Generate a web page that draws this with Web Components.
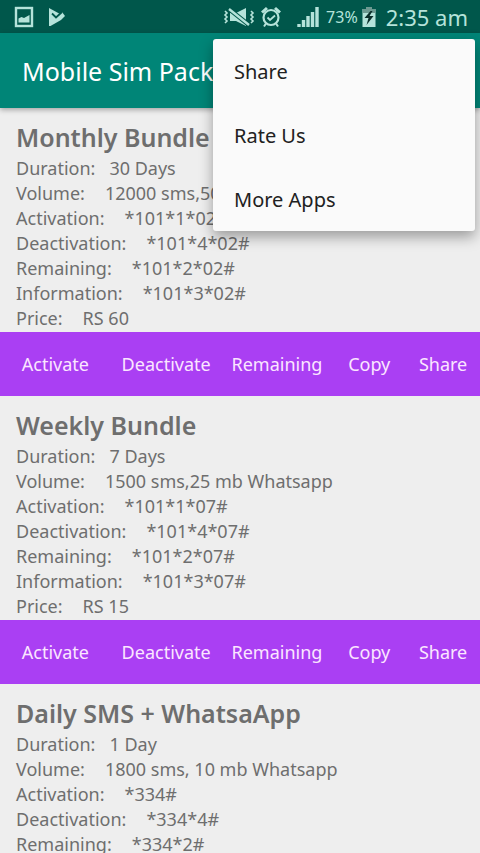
<!DOCTYPE html>
<html lang="en">
<head>
<meta charset="utf-8">
<meta name="viewport" content="width=device-width, initial-scale=1">
<title>Mobile Sim Pack</title>
<style>
    body {
        margin: 0;
        background: #eeeeee;
        color: #6e6e6e;
        font-family: "Noto Sans", "Open Sans", sans-serif;
    }
</style>
</head>
<body>
<sim-app>
    <status-bar slot="status" battery="73%" time="2:35 am"></status-bar>
    <app-bar slot="bar" text="Mobile Sim Pack">
        <menu-option text="Share"></menu-option>
        <menu-option text="Rate Us"></menu-option>
        <menu-option text="More Apps"></menu-option>
    </app-bar>

    <bundle-card text="Monthly Bundle">
        <bundle-row label="Duration:" short>30 Days</bundle-row>
        <bundle-row label="Volume:">12000 sms,50</bundle-row>
        <bundle-row label="Activation:">*101*1*02#</bundle-row>
        <bundle-row label="Deactivation:">*101*4*02#</bundle-row>
        <bundle-row label="Remaining:">*101*2*02#</bundle-row>
        <bundle-row label="Information:">*101*3*02#</bundle-row>
        <bundle-row label="Price:">RS 60</bundle-row>
    </bundle-card>
    <bundle-actions></bundle-actions>

    <bundle-card text="Weekly Bundle">
        <bundle-row label="Duration:" short>7 Days</bundle-row>
        <bundle-row label="Volume:">1500 sms,25 mb Whatsapp</bundle-row>
        <bundle-row label="Activation:">*101*1*07#</bundle-row>
        <bundle-row label="Deactivation:">*101*4*07#</bundle-row>
        <bundle-row label="Remaining:">*101*2*07#</bundle-row>
        <bundle-row label="Information:">*101*3*07#</bundle-row>
        <bundle-row label="Price:">RS 15</bundle-row>
    </bundle-card>
    <bundle-actions></bundle-actions>

    <bundle-card text="Daily SMS + WhatsaApp">
        <bundle-row label="Duration:" short>1 Day</bundle-row>
        <bundle-row label="Volume:">1800 sms, 10 mb Whatsapp</bundle-row>
        <bundle-row label="Activation:">*334#</bundle-row>
        <bundle-row label="Deactivation:">*334*4#</bundle-row>
        <bundle-row label="Remaining:">*334*2#</bundle-row>
    </bundle-card>
</sim-app>

<script>
class SimApp extends HTMLElement {
    constructor() {
        super();
        this.attachShadow({ mode: "open" });
        this.shadowRoot.innerHTML = `
        <style>
        :host {
            display: flex;
            flex-direction: column;
            height: 100vh;
        }
        header {
            position: relative;
            z-index: 1;
        }
        main {
            flex: 1;
            min-height: 0;
            overflow-y: auto;
            scrollbar-width: none;
        }
        </style>
        <header>
            <slot name="status"></slot>
            <slot name="bar"></slot>
        </header>
        <main><slot></slot></main>
        `;
    }
}
customElements.define("sim-app", SimApp);

class StatusBar extends HTMLElement {
    constructor() {
        super();
        this.attachShadow({ mode: "open" });
        this.shadowRoot.innerHTML = `
        <style>
        :host {
            display: flex;
            align-items: center;
            justify-content: space-between;
            height: 33px;
            padding: 0 12px 0 14px;
            background: #00574b;
            color: #b5e3da;
        }
        div {
            display: flex;
            align-items: center;
        }
        svg {
            display: block;
            fill: none;
            stroke: currentColor;
        }
        .left {
            gap: 14px;
        }
        .alarm {
            margin: 0 16px 0 6px;
        }
        .battery {
            font-size: 16px;
            margin: 0 4px 0 7px;
        }
        .time {
            font-size: 22px;
            line-height: 30px;
            margin-left: 10px;
        }
        </style>
        <div class="left">
            <svg width="20" height="22" viewBox="0 0 20 22">
                <rect x="2" y="2" width="16" height="18" stroke-width="2.4"/>
                <path d="M4.500 16.500v-4l3-1.500 2.500 1 5.500-3v7.500z" fill="currentColor" stroke="none"/>
            </svg>
            <svg width="18" height="20" viewBox="0 0 18 20">
                <path d="M1 1l11 6 2-2 3 4-4 4L2.500 19H1z" fill="currentColor" stroke="none"/>
                <path d="M4 6.500l4 4 6-5.500" stroke="#00574b" stroke-width="1.800"/>
            </svg>
        </div>
        <div>
            <svg width="32" height="22" viewBox="0 0 32 22">
                <path d="M2 5l2 2-2 2 2 2-2 2 2 2-2 2M28 5l2 2-2 2 2 2-2 2 2 2-2 2" stroke-width="1.600"/>
                <path d="M7 7h6l10-5v18l-10-5H7z" fill="currentColor" stroke="none"/>
                <path d="M6 3l20 16" stroke="#00574b" stroke-width="4.500"/>
                <path d="M6 3l20 16" stroke-width="2.400"/>
            </svg>
            <svg class="alarm" width="20" height="22" viewBox="0 0 20 22">
                <circle cx="10" cy="11.500" r="7.500" stroke-width="2.200"/>
                <path d="M1 6.500l5-4.500M19 6.500l-5-4.500" stroke-width="3"/>
                <path d="M6.500 11.500l2.500 2.500 5-4.500" stroke-width="1.800"/>
                <path d="M5 17.500l-2 3M15 17.500l2 3" stroke-width="2"/>
            </svg>
            <svg width="22" height="22" viewBox="0 0 22 22">
                <path d="M2 21v-3M6.500 21v-7M11 21v-11M15.500 21v-15M20 21v-20" stroke-width="3.400"/>
            </svg>
            <span class="battery"></span>
            <svg width="14" height="22" viewBox="0 0 14 22">
                <path d="M4 1h6v2h3.500v18H.5V3H4z" fill="currentColor" stroke="none"/>
                <path d="M4 1h6v2h3.500v4H.5V3H4z" fill="#6c9991" stroke="none"/>
                <path d="M8.500 5L2.500 12h4l-2 7 7-9H7.500l3-5z" fill="#0b2e2a" stroke="none"/>
            </svg>
            <span class="time"></span>
        </div>
        `;
    }
    connectedCallback() {
        this.shadowRoot.querySelector(".battery").textContent = this.getAttribute("battery");
        this.shadowRoot.querySelector(".time").textContent = this.getAttribute("time");
    }
}
customElements.define("status-bar", StatusBar);

class AppBar extends HTMLElement {
    constructor() {
        super();
        this.attachShadow({ mode: "open" });
        this.shadowRoot.innerHTML = `
        <style>
        :host {
            display: flex;
            align-items: center;
            position: relative;
            height: 75px;
            padding: 0 22px;
            background: #008577;
            color: #ffffff;
            box-shadow: 0 2px 5px rgba(0, 0, 0, 0.3);
        }
        h1 {
            margin: 0;
            font-size: 25px;
            font-weight: 400;
            white-space: nowrap;
        }
        nav {
            position: absolute;
            top: 6px;
            right: 5px;
            width: 262px;
            border-radius: 3px;
            background: #fafafa;
            color: #212121;
            box-shadow: 0 6px 14px rgba(0, 0, 0, 0.35);
        }
        </style>
        <h1></h1>
        <nav><slot></slot></nav>
        `;
    }
    connectedCallback() {
        this.shadowRoot.querySelector("h1").textContent = this.getAttribute("text");
    }
}
customElements.define("app-bar", AppBar);

class MenuOption extends HTMLElement {
    constructor() {
        super();
        this.attachShadow({ mode: "open" });
        this.shadowRoot.innerHTML = `
        <style>
        :host {
            display: block;
        }
        button {
            display: block;
            width: 100%;
            height: 64px;
            padding: 0 21px;
            border: 0;
            background: none;
            color: inherit;
            font-family: inherit;
            font-size: 20px;
            text-align: left;
        }
        </style>
        <button type="button"></button>
        `;
    }
    connectedCallback() {
        this.shadowRoot.querySelector("button").textContent = this.getAttribute("text");
    }
}
customElements.define("menu-option", MenuOption);

class BundleCard extends HTMLElement {
    constructor() {
        super();
        this.attachShadow({ mode: "open" });
        this.shadowRoot.innerHTML = `
        <style>
        :host {
            display: block;
            padding: 11px 16px 1px;
        }
        h2 {
            margin: 0;
            font-size: 25px;
            font-weight: 600;
            line-height: 37px;
        }
        </style>
        <h2></h2>
        <slot></slot>
        `;
    }
    connectedCallback() {
        this.shadowRoot.querySelector("h2").textContent = this.getAttribute("text");
    }
}
customElements.define("bundle-card", BundleCard);

class BundleRow extends HTMLElement {
    constructor() {
        super();
        this.attachShadow({ mode: "open" });
        this.shadowRoot.innerHTML = `
        <style>
        :host {
            display: flex;
            gap: 20px;
            font-size: 18px;
            line-height: 25px;
            white-space: nowrap;
        }
        :host([short]) {
            gap: 14px;
        }
        </style>
        <span class="label"></span>
        <span><slot></slot></span>
        `;
    }
    connectedCallback() {
        this.shadowRoot.querySelector(".label").textContent = this.getAttribute("label");
    }
}
customElements.define("bundle-row", BundleRow);

class BundleActions extends HTMLElement {
    constructor() {
        super();
        this.attachShadow({ mode: "open" });
        this.shadowRoot.innerHTML = `
        <style>
        :host {
            display: flex;
            height: 64px;
            background: #aa3ff3;
            color: #fbe6ff;
        }
        button {
            flex: 3 1 0;
            min-width: 0;
            padding: 0;
            border: 0;
            background: none;
            color: inherit;
            font-family: inherit;
            font-size: 18px;
        }
        .small {
            flex-grow: 2;
        }
        </style>
        <button type="button">Activate</button>
        <button type="button">Deactivate</button>
        <button type="button">Remaining</button>
        <button type="button" class="small">Copy</button>
        <button type="button" class="small">Share</button>
        `;
    }
}
customElements.define("bundle-actions", BundleActions);
</script>
</body>
</html>
